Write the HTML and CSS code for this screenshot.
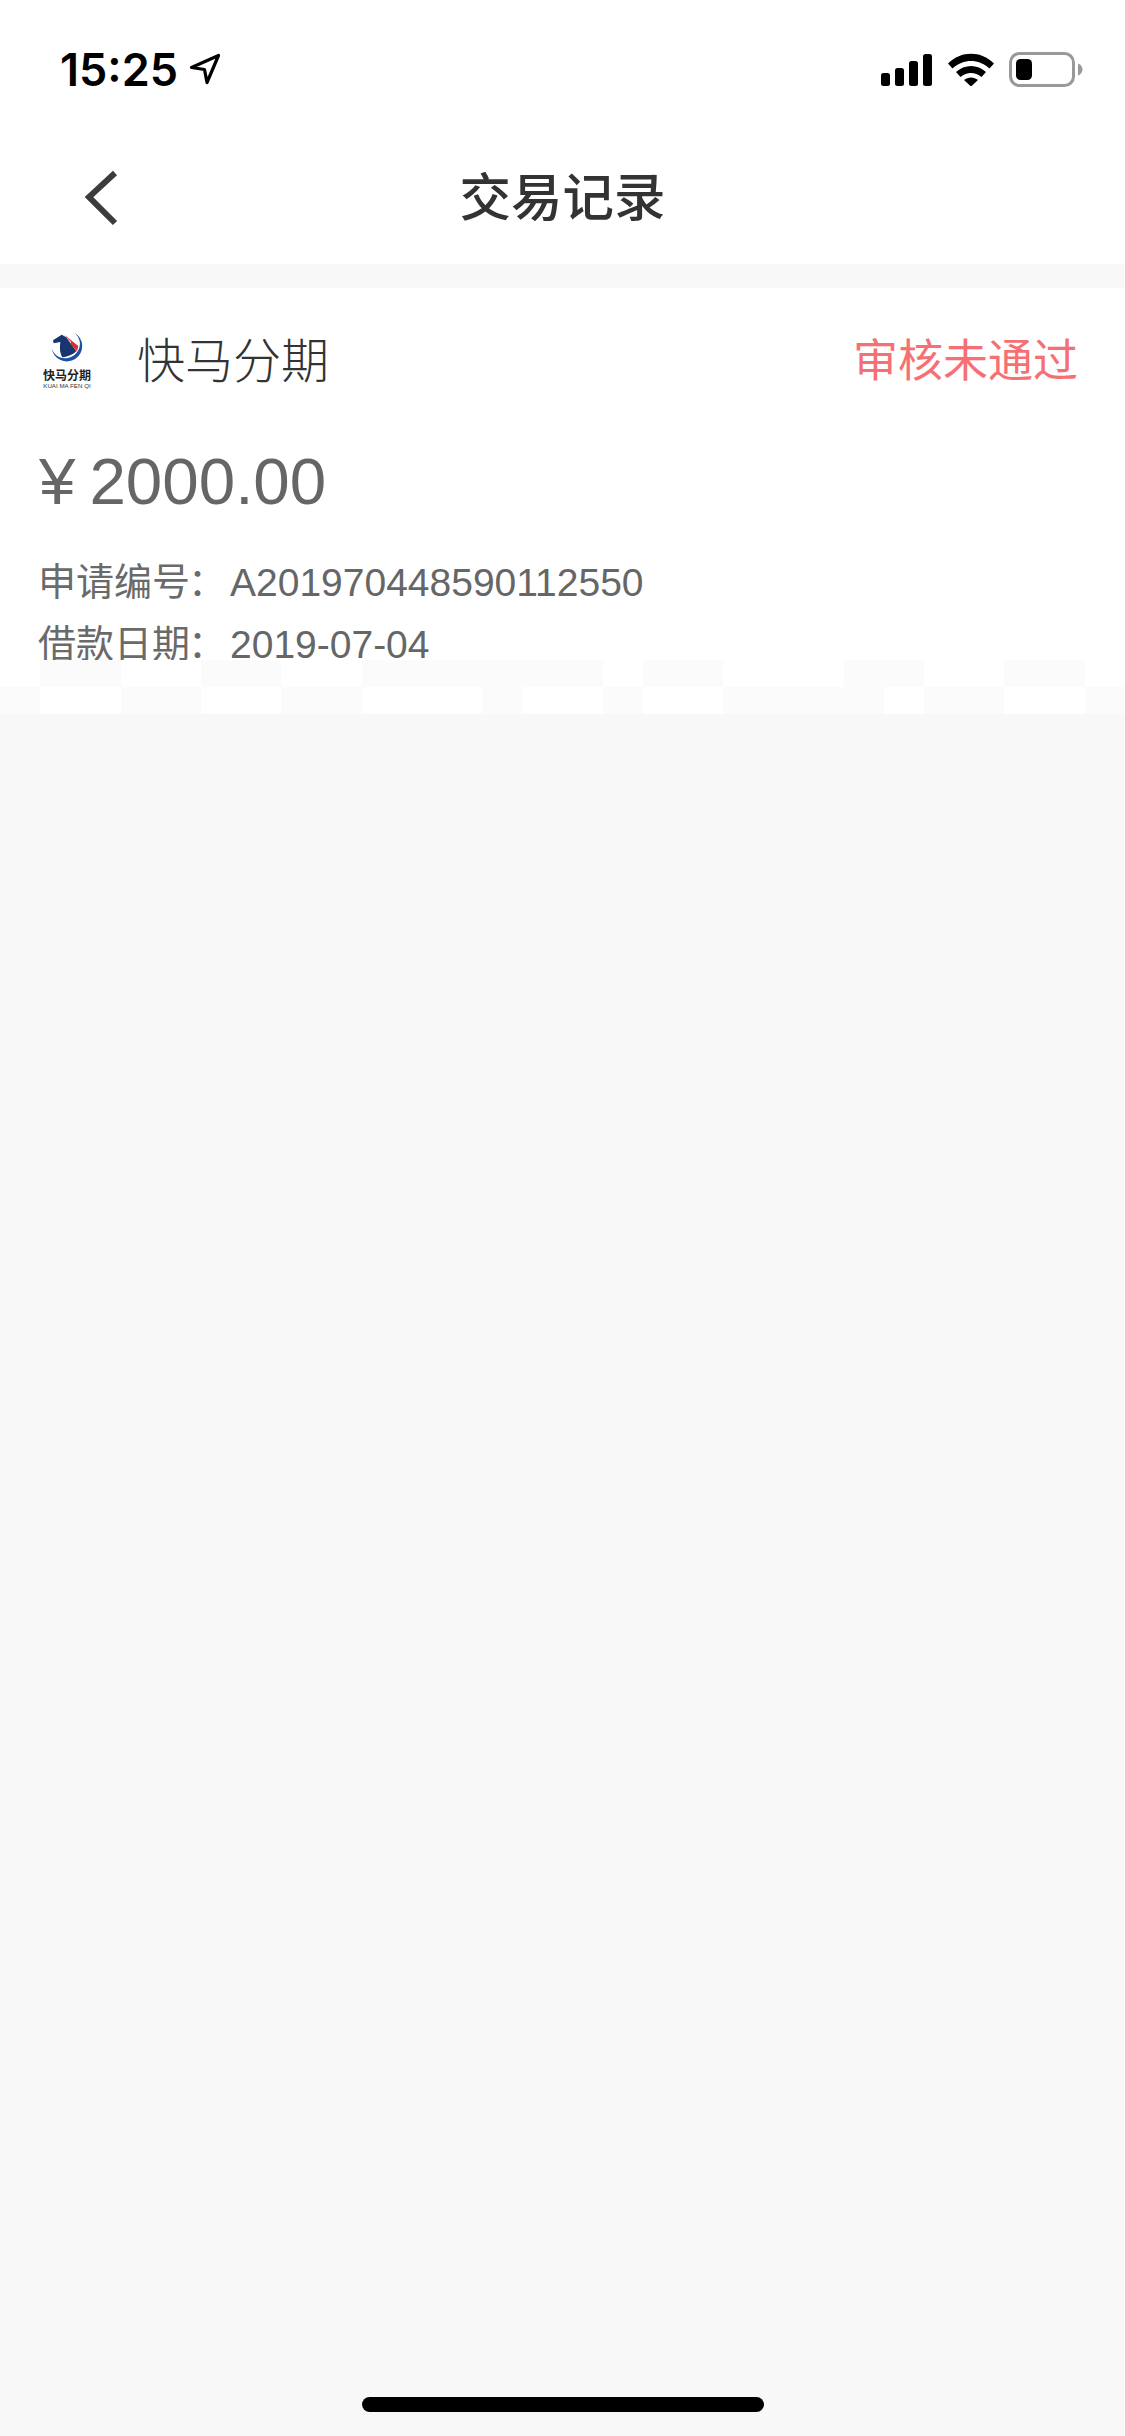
FILE: index.html
```html
<!DOCTYPE html>
<html lang="zh-CN">
<head>
	<meta charset="UTF-8">
	<title>交易记录</title>
	<link rel="stylesheet" href="styles.css">
</head>
<body>
<div class="page">
	<!--状态栏-->
	<div class="status_bar">
		<div class="status_time">
			<span>15:25</span>
			<svg class="ico_loc" width="32" height="32" viewBox="0 0 32 32"><path d="M2.5 14.5 29.5 2.5 18 29.5 15.5 16.5Z" fill="none" stroke="#000" stroke-width="3.2" stroke-linejoin="round"/></svg>
		</div>
		<div class="status_icons">
			<svg width="52" height="33" viewBox="0 0 52 33"><rect x="0" y="20" width="9" height="13" rx="2.5"/><rect x="14" y="15" width="9" height="18" rx="2.5"/><rect x="28" y="8" width="9" height="25" rx="2.5"/><rect x="42" y="1" width="9" height="32" rx="2.5"/></svg>
			<svg width="46" height="33" viewBox="0 0 46 33"><path d="M0 10.500C13 -2.500 33 -2.500 46 10.500L41.500 15.500C31 5.500 15 5.500 4.500 15.500Z"/><path d="M8 19C16.500 11 29.500 11 38 19L33.500 24C27 18.500 19 18.500 12.500 24Z"/><path d="M16 27C20 23.500 26 23.500 30 27L23 33.500Z"/></svg>
			<svg width="74" height="35" viewBox="0 0 74 35"><rect x="1.500" y="1.500" width="63" height="32" rx="9" fill="none" stroke="#999" stroke-width="3"/><rect x="7" y="7" width="16" height="21" rx="4.500"/><path d="M69 11.500C72 12.500 73.500 15 73.500 17.500 73.500 20 72 22.500 69 23.500Z" fill="#999"/></svg>
		</div>
	</div>

	<!--导航-->
	<div class="nav_bar">
		<svg class="ico_back" width="40" height="58" viewBox="0 0 40 58"><path d="M31 3 5 27 31 53" fill="none" stroke="#3c3c3c" stroke-width="6"/></svg>
		<div class="nav_title">交易记录</div>
	</div>

	<div class="record">
		<div class="record_head">
			<div class="logo">
				<svg class="logo_mark" width="34" height="32" viewBox="87 36 102 96">
					<path d="M160 44A46 46 0 1 1 92 90C98 112 118 124 140 120 166 116 180 92 176 70 174 60 168 50 160 44Z" fill="#1d4fa3"/>
					<path d="M122 50 96 67 98 76 118 72C116 90 116 104 124 118 142 116 158 108 166 100L136 58Z" fill="#17366f"/>
					<path d="M130 50 172 84 168 100 148 78 150 72Z" fill="#d8322f"/>
				</svg>
				<div class="logo_cn">快马分期</div>
				<div class="logo_en">KUAI MA FEN QI</div>
			</div>
			<div class="record_name">快马分期</div>
			<div class="record_state">审核未通过</div>
		</div>
		<div class="record_money"><span class="yen">¥</span>2000.00</div>
		<div class="record_line"><span class="line_label">申请编号<i>：</i></span>A201970448590112550</div>
		<div class="record_line"><span class="line_label">借款日期<i>：</i></span>2019-07-04</div>
	</div>
	<!--卡片底部的色块-->
	<div class="mosaic mosaic_a"></div>
	<div class="mosaic mosaic_b"></div>

	<div class="home_bar"></div>
</div>
</body>
</html>
```

FILE: styles.css
```css
*{
	padding:0;
	margin:0;
	box-sizing:border-box;
}
body{
	background:#f8f8f8;
	font-family:"Liberation Sans","Noto Sans CJK SC",sans-serif;
}
.page{
	width:1125px;
	height:2436px;
	display:flex;
	flex-direction:column;
	overflow:hidden;
}
/**状态栏**/
.status_bar{
	height:132px;
	background:#fff;
	display:flex;
	justify-content:space-between;
	padding:52px 42px 0 60px;
}
.status_time{
	display:flex;
	gap:11px;
	height:34px;
	align-items:center;
	font-family:Inter,sans-serif;
	font-size:45px;
	font-weight:600;
	color:#000;
}
.status_icons{
	display:flex;
	gap:15px;
	height:34px;
	align-items:center;
}
/**导航**/
.nav_bar{
	height:132px;
	background:#fff;
	display:grid;
	grid-template-columns:1fr auto 1fr;
	align-items:center;
	padding:0 0 8px 84px;
	margin-bottom:24px;
}
.ico_back{
	margin-top:10px;
}
.nav_title{
	font-family:"Noto Sans CJK SC",sans-serif;
	font-size:51.5px;
	font-weight:500;
	color:#333;
	line-height:60px;
	margin-left:-84px;
}
/**记录卡片**/
.record{
	height:372px;
	background:#fff;
	overflow:hidden;
	padding:0 0 0 39px;
}
.record_head{
	display:flex;
	align-items:flex-start;
	height:120px;
	padding:42px 47px 0 1px;
}
.logo{
	width:54px;
	display:flex;
	flex-direction:column;
	align-items:center;
	font-family:"Noto Sans CJK SC",sans-serif;
}
.logo_cn{
	font-size:12px;
	line-height:14px;
	font-weight:700;
	color:#222;
	margin-top:6px;
}
.logo_en{
	font-family:"Liberation Sans",sans-serif;
	font-size:6.2px;
	line-height:7px;
	color:#333;
	white-space:nowrap;
}
.record_name{
	font-family:"Noto Sans CJK SC",sans-serif;
	font-size:48px;
	font-weight:300;
	line-height:60px;
	color:#333;
	margin-left:43px;
	margin-top:-3px;
	flex:1;
}
.record_state{
	font-family:"Noto Sans CJK SC",sans-serif;
	font-size:45px;
	line-height:60px;
	font-weight:400;
	color:#f67073;
	margin-top:-2px;
}
.record_money{
	font-size:65.5px;
	line-height:74px;
	color:#666;
	height:107px;
	margin-top:37px;
}
.yen{
	margin-right:14px;
}
.record_line{
	font-size:39px;
	line-height:62px;
	color:#666;
	display:flex;
	margin-left:-1px;
}
.line_label{
	font-family:"Noto Sans CJK SC",sans-serif;
	font-size:38px;
	color:#6a6a6a;
	width:192px;
	margin-top:-4px;
	flex:none;
}
.line_label i{
	font-style:normal;
	font-family:"Noto Sans CJK TC",sans-serif;
	margin-left:-2px;
	margin-right:-4px;
}
/**色块，两排，每段在background里写死**/
.mosaic{
	height:27px;
	flex:none;
}
.mosaic_a{
	background:linear-gradient(to right,
		#fff 0 40px,#fbfbfb 40px 121px,#fff 121px 201px,#fbfbfb 201px 281px,
		#fff 281px 362px,#fbfbfb 362px 603px,#fff 603px 643px,#fbfbfb 643px 723px,
		#fff 723px 844px,#fbfbfb 844px 924px,#fff 924px 1004px,#fbfbfb 1004px 1085px,
		#fff 1085px 1125px);
}
.mosaic_b{
	background:linear-gradient(to right,
		#fbfbfb 0 40px,#fff 40px 121px,#fbfbfb 121px 201px,#fff 201px 281px,
		#fbfbfb 281px 362px,#fff 362px 482px,#fbfbfb 482px 522px,#fff 522px 603px,
		#fbfbfb 603px 643px,#fff 643px 723px,#fbfbfb 723px 884px,#fff 884px 924px,
		#fbfbfb 924px 1004px,#fff 1004px 1085px,#fbfbfb 1085px 1125px);
}
.home_bar{
	width:402px;
	height:15px;
	border-radius:8px;
	background:#000;
	margin:auto auto 24px;
}
```
